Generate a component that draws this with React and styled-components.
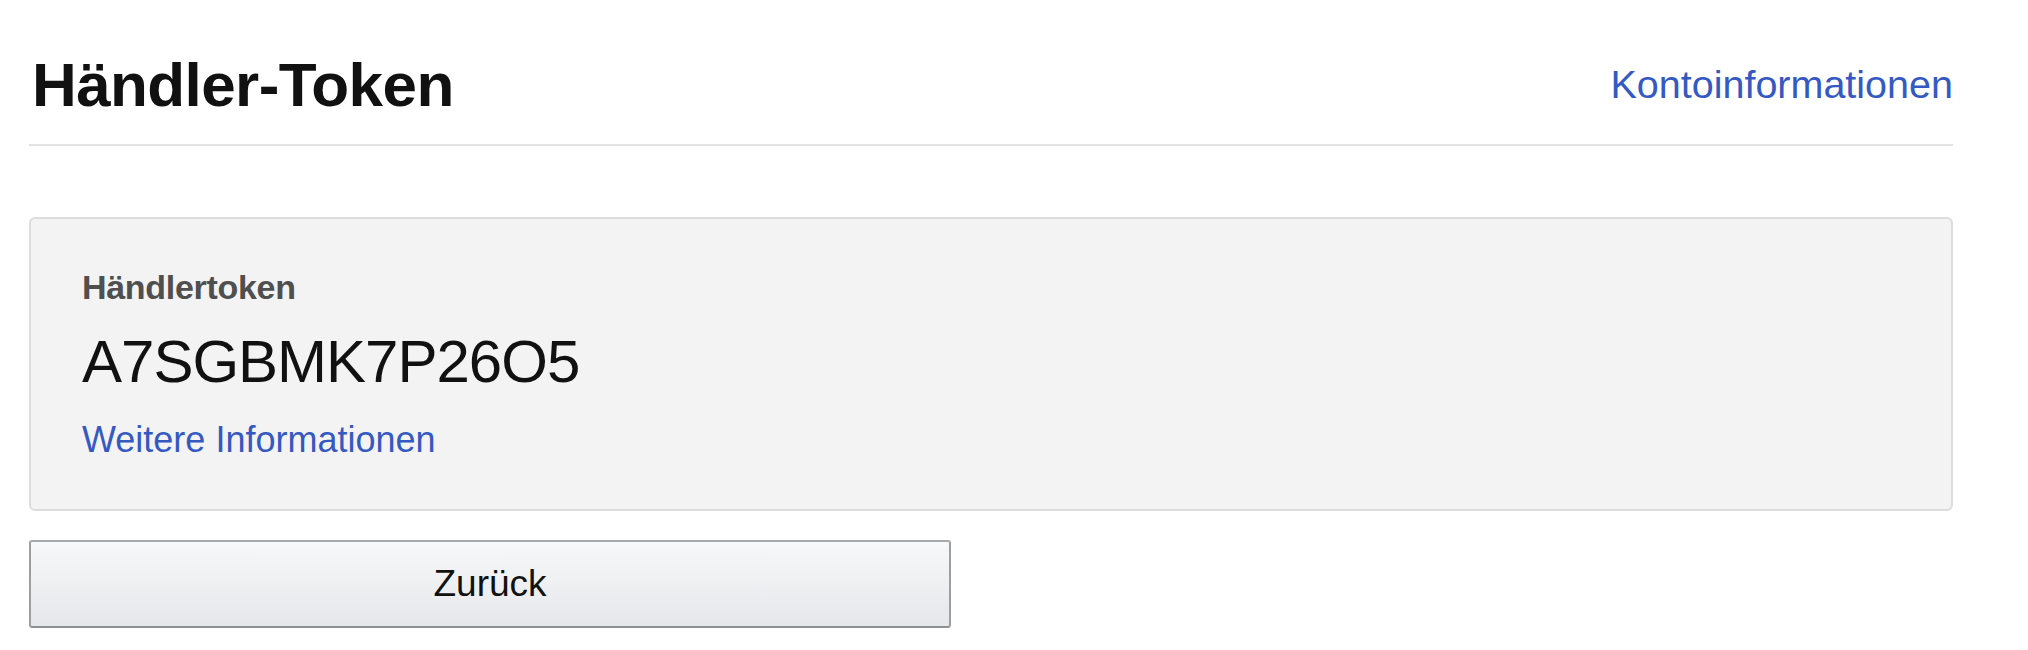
import React from 'react'
import styled, { createGlobalStyle } from 'styled-components'

const GlobalStyle = createGlobalStyle`
  html, body {
    margin: 0;
    padding: 0;
    background: #ffffff;
  }
  body {
    font-family: "Liberation Sans", Arial, sans-serif;
    color: #111111;
  }
`

const Page = styled.div`
  width: 1924px;
  padding-left: 29px;
  display: flex;
  flex-direction: column;
`

const Header = styled.div`
  display: flex;
  align-items: center;
  justify-content: space-between;
  padding: 54px 0 28px 0;
  border-bottom: 2px solid #e3e3e3;
`

const Title = styled.h1`
  margin: 0 0 0 3px;
  font-size: 62px;
  line-height: 62px;
  font-weight: 700;
  letter-spacing: -0.6px;
  color: #111111;
`

const Link = styled.a`
  font-size: ${props => props.size}px;
  line-height: ${props => props.size}px;
  color: #3559c2;
  text-decoration: none;
  cursor: pointer;
`

const Card = styled.div`
  margin-top: 71px;
  background: #f3f3f3;
  border: 2px solid #dddddd;
  border-radius: 6px;
  padding: 51px 51px 51px 51px;
  display: flex;
  flex-direction: column;
  align-items: flex-start;
`

const Label = styled.div`
  font-size: 34px;
  line-height: 34px;
  font-weight: 700;
  color: #4f4f4f;
  letter-spacing: -0.3px;
`

const Token = styled.div`
  margin-top: 28px;
  font-size: 60px;
  line-height: 60px;
  letter-spacing: -1px;
  color: #111111;
`

const MoreLink = styled(Link)`
  margin-top: 30px;
`

const Button = styled.button`
  margin-top: 29px;
  width: 922px;
  height: 88px;
  border: 2px solid #9c9ea4;
  border-top-color: #a7a9ae;
  border-bottom-color: #8d8f95;
  border-radius: 3px;
  background: linear-gradient(to bottom, #f7f8fa, #e6e7ea);
  font-family: "Liberation Sans", Arial, sans-serif;
  font-size: 37px;
  color: #111111;
  cursor: pointer;
  padding: 0;
`

const App = () => {
  return (
    <Page>
      <GlobalStyle />
      <Header>
        <Title>Händler-Token</Title>
        <Link size={39.5}>Kontoinformationen</Link>
      </Header>
      <Card>
        <Label>Händlertoken</Label>
        <Token>A7SGBMK7P26O5</Token>
        <MoreLink size={36}>Weitere Informationen</MoreLink>
      </Card>
      <div>
        <Button>Zurück</Button>
      </div>
    </Page>
  )
}

export default App
